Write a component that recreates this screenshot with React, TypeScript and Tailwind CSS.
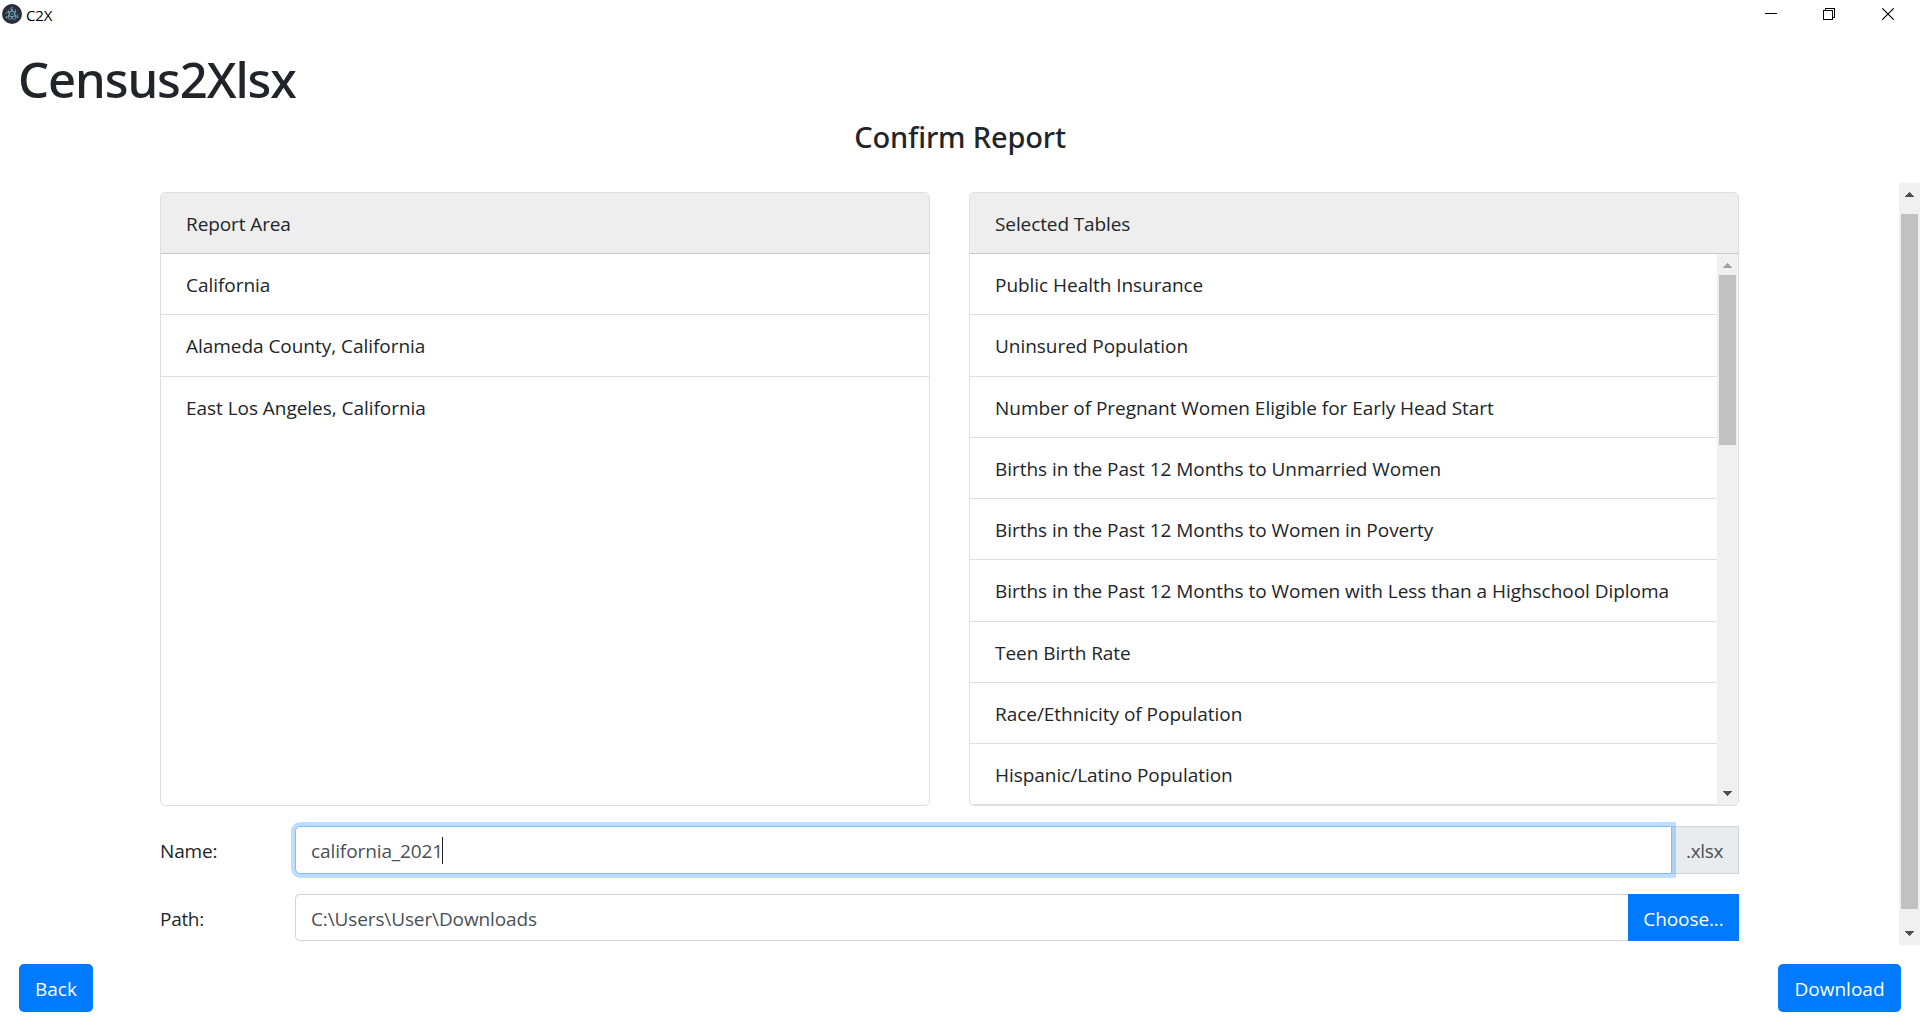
import React, { ReactNode } from "react";

const areas = ["California", "Alameda County, California", "East Los Angeles, California"];

const tables = [
  "Public Health Insurance",
  "Uninsured Population",
  "Number of Pregnant Women Eligible for Early Head Start",
  "Births in the Past 12 Months to Unmarried Women",
  "Births in the Past 12 Months to Women in Poverty",
  "Births in the Past 12 Months to Women with Less than a Highschool Diploma",
  "Teen Birth Rate",
  "Race/Ethnicity of Population",
  "Hispanic/Latino Population",
];

function AppIcon() {
  return (
    <svg width="20" height="20" viewBox="0 0 20 20" fill="none">
      <circle cx="10" cy="10" r="10" fill="#2b2e3a" />
      <g stroke="#9feaf9" strokeOpacity="0.6" strokeWidth="0.8">
        <ellipse cx="10" cy="10" rx="6.2" ry="2.5" transform="rotate(0 10 10)" strokeDasharray="11 3" />
        <ellipse cx="10" cy="10" rx="6.2" ry="2.5" transform="rotate(60 10 10)" strokeDasharray="12 3" />
        <ellipse cx="10" cy="10" rx="6.2" ry="2.5" transform="rotate(120 10 10)" strokeDasharray="12 3" />
      </g>
      <g fill="#9feaf9" fillOpacity="0.7">
        <circle cx="10" cy="10" r="0.8" />
        <circle cx="4.6" cy="13.2" r="0.9" />
        <circle cx="15.4" cy="13.2" r="0.9" />
        <circle cx="10" cy="3.8" r="0.8" />
      </g>
    </svg>
  );
}

function TitleBar() {
  return (
    <div className="flex h-7 items-center pl-0.5 text-black">
      <AppIcon />
      <span className="mt-px ml-[4px] text-[15px] leading-5 tracking-[-0.1px]">C2X</span>
      <svg className="mr-[26px] ml-auto" width="129" height="12" viewBox="0 0 129 12" fill="none" stroke="#000" shapeRendering="crispEdges">
        <path d="M0 5.5h12" />
        <path d="M58.5 2.5h9v9h-9zM60.5 2.5v-2h9v9h-2" />
        <path d="M117.3 0.3l11.4 11.4M128.7 0.3l-11.4 11.4" strokeWidth="1.1" shapeRendering="auto" />
      </svg>
    </div>
  );
}

function Arrow({ down, color }: { down?: boolean; color: string }) {
  return (
    <svg width="9" height="5" viewBox="0 0 9 5" fill={color} shapeRendering="crispEdges">
      {down ? (
        <path d="M0 0h9v1H0zM1 1h7v1H1zM2 2h5v1H2zM3 3h3v1H3zM4 4h1v1H4z" />
      ) : (
        <path d="M4 0h1v1H4zM3 1h3v1H3zM2 2h5v1H2zM1 3h7v1H1zM0 4h9v1H0z" />
      )}
    </svg>
  );
}

function Card({ title, children }: { title: string; children: ReactNode }) {
  return (
    <section className="flex h-[614px] w-[770px] flex-col overflow-hidden rounded-[5px] border border-[#dfdfdf] bg-white">
      <h3 className="h-[61px] shrink-0 border-b border-[#c8c8c8] bg-[#eeeeee] pl-[25px] leading-[63px] tracking-[-0.1px]">{title}</h3>
      <div className="flex min-h-0 flex-1">{children}</div>
    </section>
  );
}

function Row({ children, last }: { children: ReactNode; last?: boolean }) {
  return (
    <li className={`h-[61.25px] pl-[25px] leading-[63px] tracking-[-0.04px] ${last ? "" : "border-b border-[#dfdfdf]"}`}>{children}</li>
  );
}

export default function App() {
  return (
    <div className="flex h-[1030px] w-[1920px] flex-col overflow-hidden bg-white font-['Open_Sans',sans-serif] text-[19px] text-[#212529]">
      <TitleBar />
      <h1 className="h-[91px] pl-[18px] font-['Noto_Sans',sans-serif] text-[49px] leading-[103px] font-medium tracking-[-1.1px]">
        Census2Xlsx
      </h1>
      <h2 className="h-16 text-center font-['Noto_Sans',sans-serif] text-[29px] leading-9 font-medium tracking-[-0.15px]">
        Confirm Report
      </h2>

      <div className="flex h-[762px] shrink-0">
        <main className="flex-1 pt-[9px] pl-40">
          <div className="flex gap-[39px]">
            <Card title="Report Area">
              <ul className="flex-1">
                {areas.map((a, i) => (
                  <Row key={a} last={i === areas.length - 1}>{a}</Row>
                ))}
              </ul>
            </Card>
            <Card title="Selected Tables">
              <ul className="flex-1">
                {tables.map((t) => (
                  <Row key={t}>{t}</Row>
                ))}
              </ul>
              <div className="flex w-[21px] flex-col items-center justify-between bg-[#f0f0f0] pt-[9px] pb-[9px]">
                <div className="flex flex-col items-center gap-[7px]">
                  <Arrow color="#a3a3a3" />
                  <div className="h-[170px] w-[17px] bg-[#c1c1c1]" />
                </div>
                <Arrow down color="#505050" />
              </div>
            </Card>
          </div>

          <div className="mt-5 flex h-12 w-[1579px] items-center">
            <label className="w-[135px] pt-0.5 tracking-[-0.15px]">Name:</label>
            <div className="relative z-10 flex h-12 flex-1 items-center rounded-l-[5px] border border-[#80bdff] bg-white pt-[3px] pl-[15px] tracking-[-0.1px] text-[#495057] shadow-[0_0_0_4px_rgba(0,123,255,0.25)]">
              california_2021
              <span className="mb-[3px] -ml-px h-[27px] w-px bg-[#212529]" />
            </div>
            <span className="flex h-12 w-[67px] items-center border border-l-0 border-[#ced4da] bg-[#e9ecef] pt-0.5 pl-[14px] tracking-[-0.3px] text-[#495057]">
              .xlsx
            </span>
          </div>

          <div className="mt-5 flex h-[47px] w-[1579px] items-center">
            <label className="w-[135px] pt-[3px] tracking-[-0.3px]">Path:</label>
            <div className="flex h-[47px] flex-1 items-center rounded-l-[5px] border border-r-0 border-[#ced4da] pt-[3px] pl-[15px] tracking-[-0.12px] text-[#495057]">
              C:\Users\User\Downloads
            </div>
            <button className="h-[47px] w-[111px] bg-[#007bff] pt-[3px] tracking-[-0.1px] text-white">Choose...</button>
          </div>
        </main>

        <div className="flex w-[21px] flex-col items-center justify-between bg-[#f0f0f0] py-[9px]">
          <div className="flex flex-col items-center gap-[17px]">
            <Arrow color="#505050" />
            <div className="h-[695px] w-[17px] bg-[#c1c1c1]" />
          </div>
          <Arrow down color="#505050" />
        </div>
      </div>

      <footer className="flex justify-between pt-[19px] pr-[19px] pl-[19px]">
        <button className="h-12 w-[74px] rounded-[5px] bg-[#007bff] pt-0.5 text-white">Back</button>
        <button className="h-12 w-[123px] rounded-[5px] bg-[#007bff] pt-0.5 text-white">Download</button>
      </footer>
    </div>
  );
}
